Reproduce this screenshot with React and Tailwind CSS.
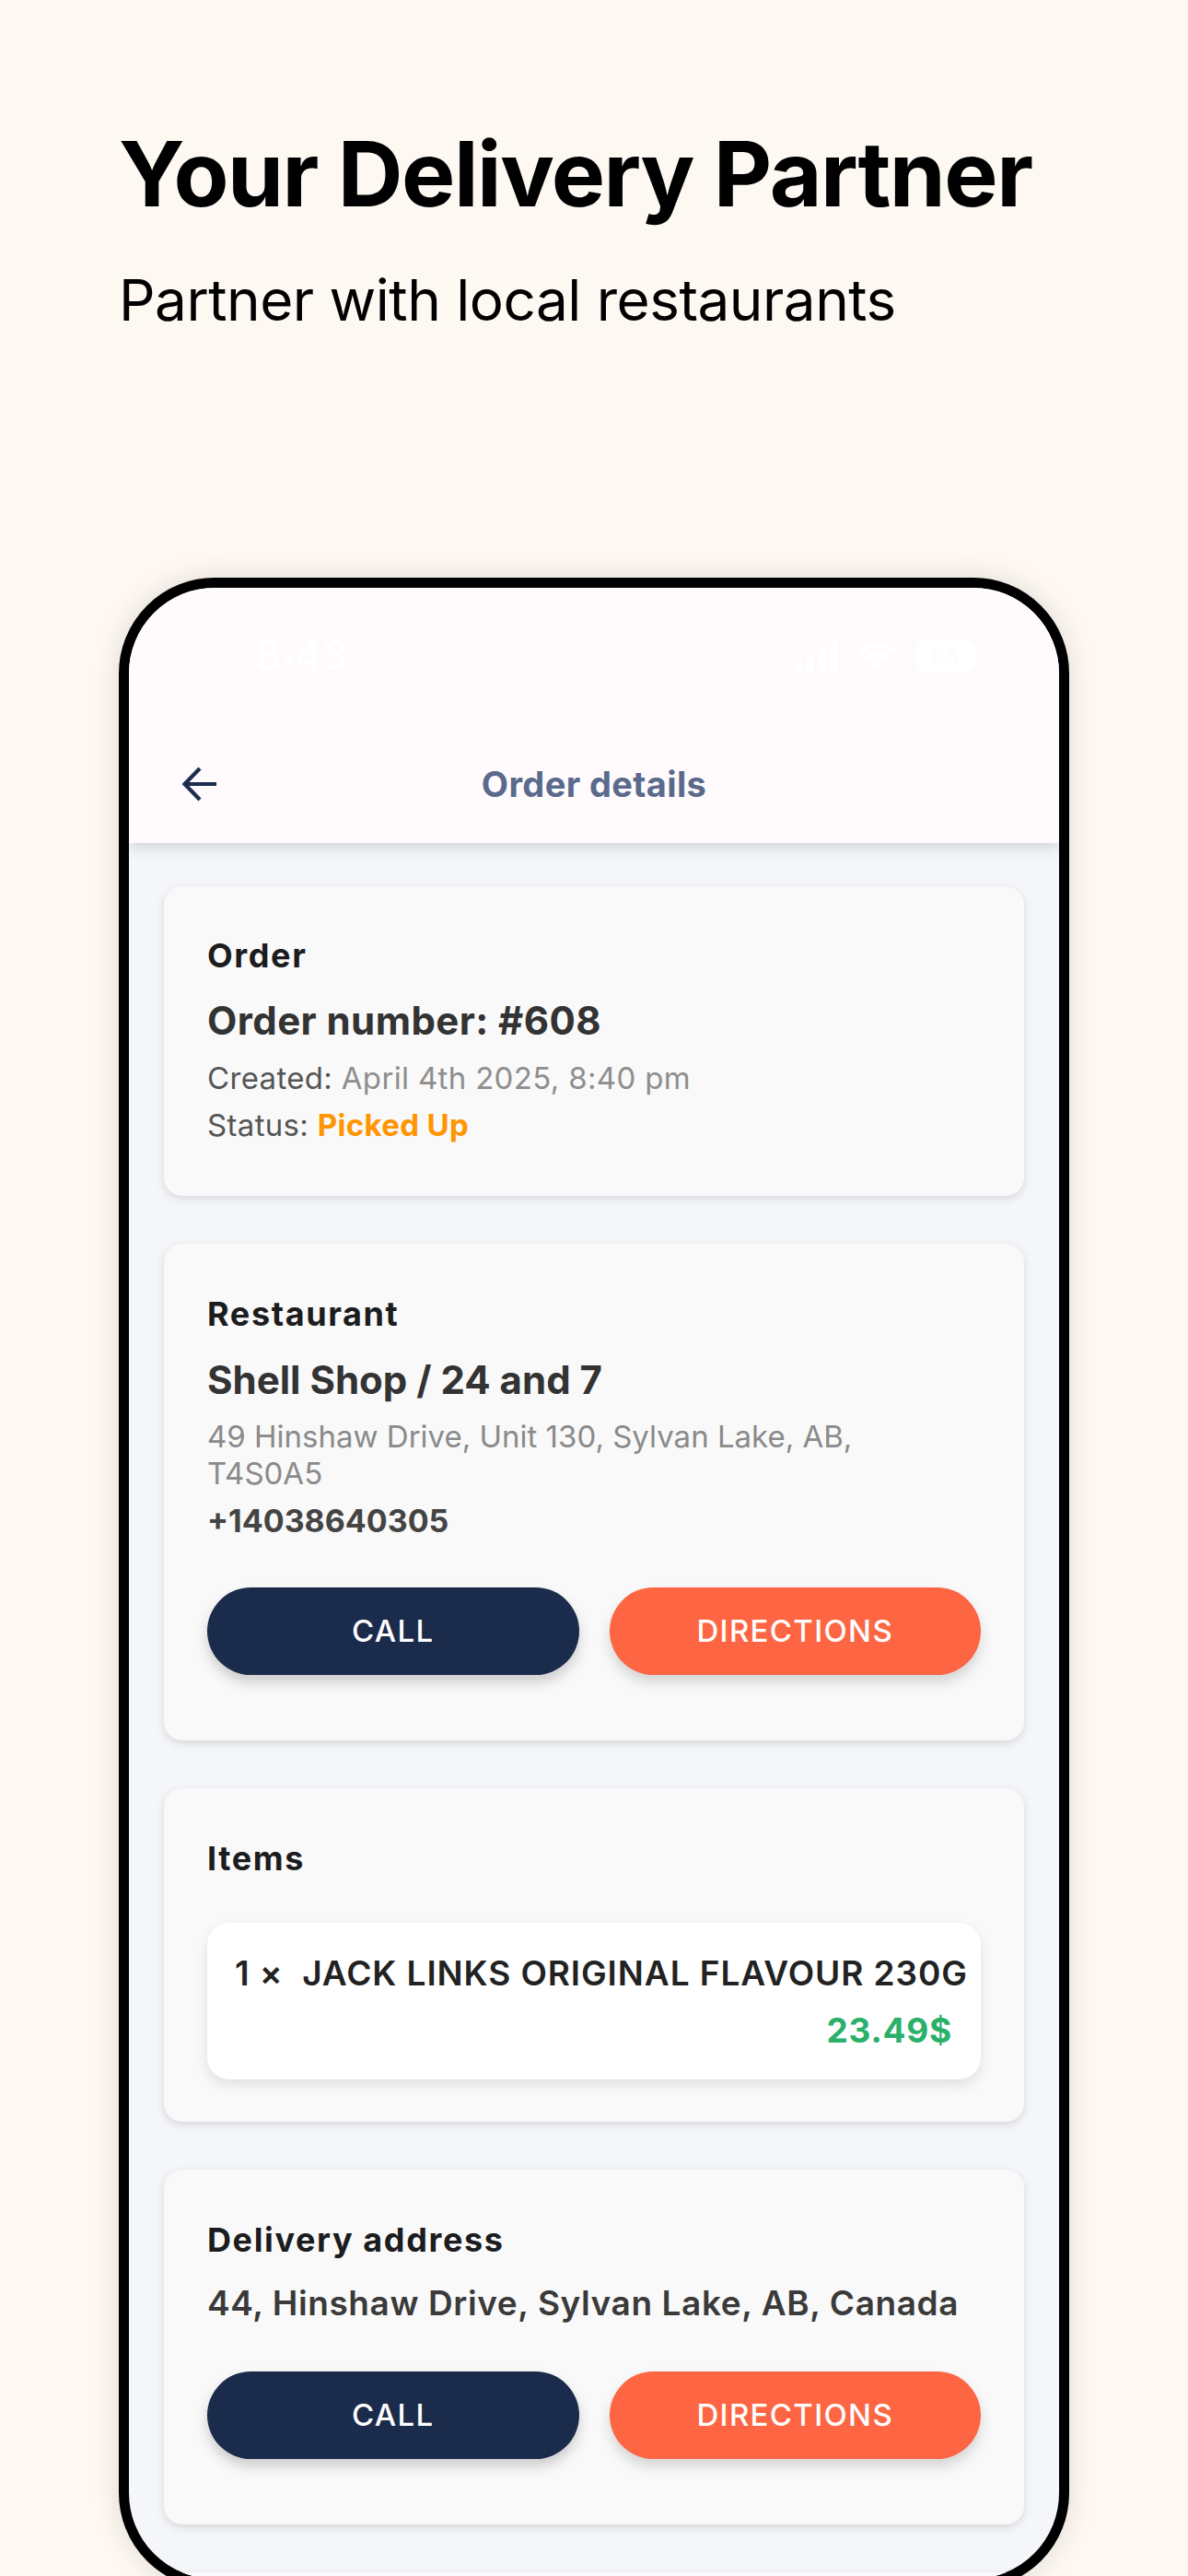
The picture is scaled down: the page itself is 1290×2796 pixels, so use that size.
import React from "react";

function BackArrow() {
  return (
    <svg width="40" height="40" viewBox="0 0 40 40" fill="none">
      <path d="M38 20H3.5M20 3L3.5 20L20 37" stroke="#1c2d4f" strokeWidth="4.2" strokeLinejoin="miter" />
    </svg>
  );
}

function StatusIcons() {
  return (
    <div className="flex items-center gap-[20px]">
      <svg width="50" height="34" viewBox="0 0 50 34" fill="#ffffff">
        <rect x="0" y="24" width="8" height="10" rx="2" />
        <rect x="13" y="17" width="8" height="17" rx="2" />
        <rect x="26" y="9" width="8" height="25" rx="2" />
        <rect x="39" y="0" width="8" height="34" rx="2" />
      </svg>
      <svg width="42" height="32" viewBox="0 0 42 32" fill="none" stroke="#ffffff" strokeWidth="5" strokeLinecap="round">
        <path d="M4 11C14 2 28 2 38 11" />
        <path d="M11 18C17 13 25 13 31 18" />
        <circle cx="21" cy="26" r="3" fill="#ffffff" stroke="none" />
      </svg>
      <div className="w-[64px] h-[34px] rounded-[10px] bg-white flex items-center justify-center text-[22px] font-bold leading-none text-[#fffbfd]">
        66
      </div>
    </div>
  );
}

function Card({ children, className = "" }) {
  return (
    <div className={"rounded-[20px] bg-[#f9f9f9] shadow-[0_3px_10px_rgba(0,0,0,0.13)] px-[47px] " + className}>
      {children}
    </div>
  );
}

function Label({ children }) {
  return <div className="text-[36px] leading-[42px] font-bold tracking-[0.045em] text-[#1c1c1e]">{children}</div>;
}

function Buttons() {
  return (
    <div className="mt-[52px] grid grid-cols-2 gap-[33px]">
      <div className="h-[95px] rounded-full bg-[#1a2b4c] text-white text-[33px] font-medium tracking-[0.04em] flex items-center justify-center shadow-[0_8px_14px_rgba(0,0,0,0.18)]">
        CALL
      </div>
      <div className="h-[95px] rounded-full bg-[#fd6543] text-white text-[33px] font-medium tracking-[0.04em] flex items-center justify-center shadow-[0_8px_14px_rgba(0,0,0,0.15)]">
        DIRECTIONS
      </div>
    </div>
  );
}

export default function App() {
  return (
    <div className="w-[1290px] h-[2796px] overflow-hidden bg-[#fdf9f2] font-['Inter',sans-serif]">
      <div className="pl-[129px] pt-[129px]">
        <h1 className="text-[98px] leading-[119px] font-bold text-black tracking-[-0.015em] whitespace-nowrap">
          Your Delivery Partner
        </h1>
        <p className="mt-[40px] text-[62px] leading-[75px] text-black tracking-[-0.008em] whitespace-nowrap">
          Partner with local restaurants
        </p>

        <div className="mt-[264px] w-[1032px] h-[2183px] rounded-[104px] border-[11px] border-black overflow-hidden bg-[#f5f6fa] shadow-[0_0_30px_rgba(0,0,0,0.12)]">
          {/* Header */}
          <div className="relative z-10 h-[277px] bg-[#fffbfd] shadow-[0_6px_14px_rgba(0,0,0,0.13)] flex flex-col">
            <div className="mt-[47px] h-[53px] flex items-center justify-between pl-[138px] pr-[91px]">
              <span className="text-[44px] leading-[53px] font-semibold text-white">8:43</span>
              <StatusIcons />
            </div>
            <div className="mt-[83px] h-[60px] grid grid-cols-[1fr_auto_1fr] items-center">
              <div className="pl-[57px] flex items-center">
                <BackArrow />
              </div>
              <div className="text-[38px] leading-[46px] font-bold tracking-[0.01em] text-[#5a6a8c]">Order details</div>
              <div />
            </div>
          </div>

          {/* Content */}
          <div className="px-[38px] pt-[47px] flex flex-col gap-[52px]">
            <Card className="pt-[54px] pb-[57px]">
              <Label>Order</Label>
              <div className="mt-[25px] text-[42px] leading-[50px] font-bold tracking-[0.01em] text-[#333333]">Order number: #608</div>
              <div className="mt-[17px] text-[33px] leading-[40px] tracking-[0.01em] text-[#8e8e8e]">
                <span className="text-[#555555]">Created:</span> April 4th 2025, 8:40 pm
              </div>
              <div className="mt-[11px] text-[33px] leading-[40px] tracking-[0.01em] text-[#555555]">
                Status: <span className="font-bold text-[#ff9500]">Picked Up</span>
              </div>
            </Card>

            <Card className="pt-[55px] pb-[71px]">
              <Label>Restaurant</Label>
              <div className="mt-[26px] text-[42px] leading-[50px] font-bold text-[#333333]">Shell Shop / 24 and 7</div>
              <div className="mt-[16px] text-[33px] leading-[40px] text-[#8a8a8a]">
                49 Hinshaw Drive, Unit 130, Sylvan Lake, AB,
                <br />
                T4S0A5
              </div>
              <div className="mt-[12px] text-[34px] leading-[40px] font-bold text-[#444444]">+14038640305</div>
              <Buttons />
            </Card>

            <Card className="pt-[55px] pb-[46px]">
              <Label>Items</Label>
              <div className="mt-[49px] rounded-[24px] bg-white shadow-[0_6px_14px_rgba(0,0,0,0.10)] pl-[30px] pr-[31px] pt-[33px] pb-[31px]">
                <div className="text-[37px] leading-[44px] font-semibold tracking-[0.025em] text-[#222222] whitespace-nowrap">
                  1 ×&nbsp; JACK LINKS ORIGINAL FLAVOUR 230G
                </div>
                <div className="mt-[18px] text-[37px] leading-[44px] font-bold tracking-[0.02em] text-[#2bb06a] text-right">23.49$</div>
              </div>
            </Card>

            <Card className="pt-[55px] pb-[71px]">
              <Label>Delivery address</Label>
              <div className="mt-[26px] text-[37px] leading-[44px] font-semibold tracking-[0.016em] text-[#3a3a3a] whitespace-nowrap">
                44, Hinshaw Drive, Sylvan Lake, AB, Canada
              </div>
              <Buttons />
            </Card>

            <Card className="h-[300px]">
              <div />
            </Card>
          </div>
        </div>
      </div>
    </div>
  );
}
